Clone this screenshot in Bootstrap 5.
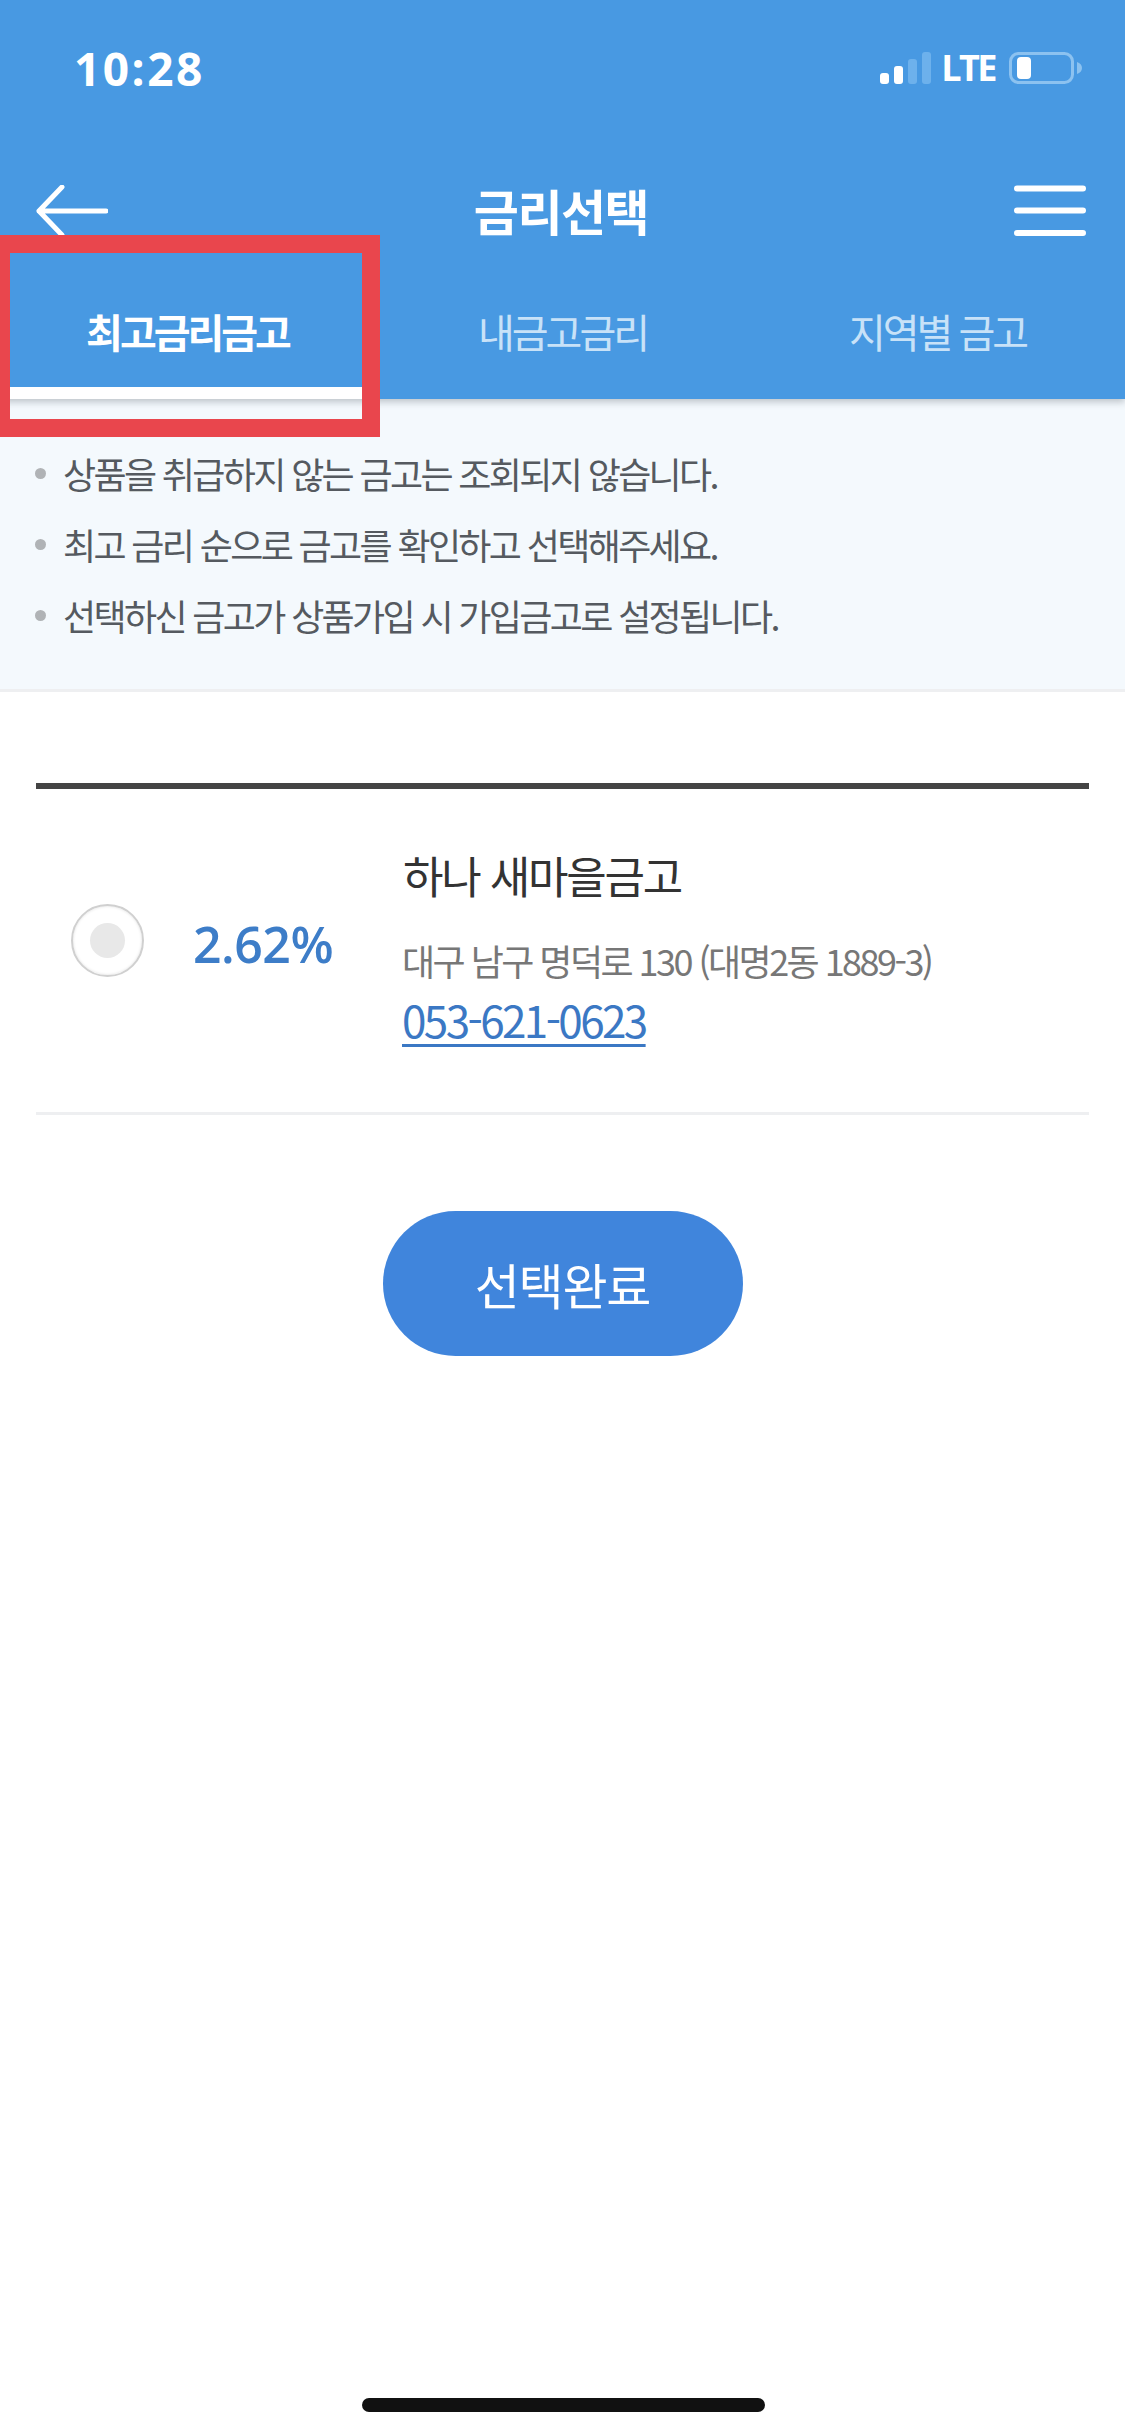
<!DOCTYPE html>
<html lang="ko">
<head>
  <meta charset="UTF-8" />
  <meta name="viewport" content="width=device-width, initial-scale=1.0"/>
  <title>금리선택</title>
  <link href="https://cdn.jsdelivr.net/npm/bootstrap@5.3.0/dist/css/bootstrap.min.css" rel="stylesheet">
  <style>
    body { font-family: "Noto Sans CJK KR", "Noto Sans", sans-serif; background: #fff; }
    .phone-page { position: relative; width: 1125px; height: 2436px; overflow: hidden; background: #fff; }

    /* 상단 파란 영역 */
    .top-area { position: relative; z-index: 2; background: #4899e2; box-shadow: 0 3px 7px rgba(70, 80, 90, .32); }
    .status-bar { height: 136px; padding: 0 43px 0 74px; color: #fff; }
    .status-time { font-family: "Open Sans", sans-serif; font-size: 46px; font-weight: 700; letter-spacing: 2.5px; }
    .status-lte { font-family: "Open Sans", sans-serif; font-size: 36px; font-weight: 700; line-height: 1; letter-spacing: -2.5px; margin: 0 14px 0 10px; }
    .title-bar { height: 150px; padding: 0 39px 0 36px; color: #fff; }
    .title-text { font-size: 49px; font-weight: 700; letter-spacing: -1.5px; line-height: 1; margin: 0 0 4px; }
    .tab-link { display: block; color: #c8e2f8; font-size: 40px; font-weight: 400; letter-spacing: -3px; line-height: 90px; padding: 0 0 11px; border-bottom: 12px solid transparent; text-decoration: none; }
    .tab-link:hover { color: #c8e2f8; }
    .tab-link.active-tab { color: #fff; font-weight: 700; border-bottom-color: #fff; }

    /* 안내문 */
    .notice-box { background: #f4f9fd; border-bottom: 3px solid #eeeff1; padding: 39px 0 38px 35px; margin: 0; }
    .notice-box li { color: #555a60; font-size: 36px; line-height: 71px; letter-spacing: -2.65px; }
    .notice-dot { width: 11px; height: 11px; border-radius: 50%; background: #b0b3b6; margin-right: 17px; flex: none; }

    /* 금고 목록 */
    .bank-list { margin: 91px 36px 0; border-top: 6px solid #444; border-bottom: 3px solid #eeeff1; padding: 56px 0 64px; }
    .radio-mark { width: 73px; height: 73px; margin: 0 49px 12px 35px; border: 2px solid #d0d0d0; border-radius: 50%; background: #fff; box-shadow: inset 0 0 3px rgba(0,0,0,.12); flex: none; }
    .radio-mark span { display: block; width: 35px; height: 35px; border-radius: 50%; background: #e8e8e8; }
    .rate-text { width: 210px; color: #3d7dc8; font-family: "Open Sans", sans-serif; font-size: 50px; font-weight: 600; margin-bottom: 4px; flex: none; letter-spacing: -.5px; }
    .bank-name { color: #333; font-size: 44px; line-height: 60px; letter-spacing: -2.2px; margin-bottom: 25px; }
    .bank-addr { color: #777; font-size: 36px; line-height: 60px; letter-spacing: -2.55px; margin-left: -1px; }
    .bank-tel { display: inline-block; margin-left: -1px; color: #3b78c4; font-size: 44px; line-height: 58px; letter-spacing: -2.6px; text-decoration-thickness: 3px; text-underline-offset: 6px; }

    .done-btn { width: 360px; height: 145px; margin-top: 96px; background: #4085dc; border: 0; color: #fff; font-size: 49px; letter-spacing: -1.2px; }
    .done-btn:hover { background: #4085dc; color: #fff; }

    /* 겹쳐 그리는 요소 */
    .red-mark { position: absolute; z-index: 3; left: 0; top: 235px; width: 380px; height: 202px; border: solid #e9464d; border-width: 18px 18px 18px 10px; }
    .home-bar { position: absolute; left: 362px; top: 2398px; width: 403px; height: 14px; border-radius: 7px; background: #111; }
  </style>
</head>
<body>
  <div class="phone-page">

    <div class="top-area">
      <!-- 상태바 -->
      <div class="status-bar d-flex align-items-center justify-content-between">
        <span class="status-time">10:28</span>
        <div class="d-flex align-items-center">
          <svg width="51" height="32" viewBox="0 0 51 32">
            <rect x="0" y="21" width="9" height="11" rx="3" fill="#fff"/>
            <rect x="14" y="14" width="9" height="18" rx="3" fill="#fff"/>
            <rect x="28" y="7" width="9" height="25" rx="3" fill="#6db1ec"/>
            <rect x="42" y="0" width="9" height="32" rx="3" fill="#6db1ec"/>
          </svg>
          <span class="status-lte">LTE</span>
          <svg width="73" height="32" viewBox="0 0 73 32">
            <rect x="1.5" y="1.5" width="62" height="29" rx="8" fill="none" stroke="#8cc2f0" stroke-width="3"/>
            <rect x="8" y="5" width="14" height="22" rx="4" fill="#fff"/>
            <path d="M68 10c3 1 5 3 5 6s-2 5-5 6z" fill="#8cc2f0"/>
          </svg>
        </div>
      </div>

      <!-- 타이틀 -->
      <div class="title-bar d-flex align-items-center justify-content-between">
        <svg width="72" height="52" viewBox="0 0 72 52">
          <path d="M26 2 3 26l23 24M3 26h67" fill="none" stroke="#fff" stroke-width="5" stroke-linecap="round" stroke-linejoin="round"/>
        </svg>
        <h1 class="title-text">금리선택</h1>
        <svg width="72" height="52" viewBox="0 0 72 52">
          <path d="M3 3.500h66M3 25.500h66M3 48h66" fill="none" stroke="#fff" stroke-width="6" stroke-linecap="round"/>
        </svg>
      </div>

      <!-- 탭 -->
      <ul class="nav nav-justified text-center">
        <li class="nav-item"><a class="tab-link active-tab" href="#">최고금리금고</a></li>
        <li class="nav-item"><a class="tab-link" href="#">내금고금리</a></li>
        <li class="nav-item"><a class="tab-link" href="#">지역별 금고</a></li>
      </ul>
    </div>

    <ul class="notice-box list-unstyled">
      <li class="d-flex align-items-center"><span class="notice-dot"></span>상품을 취급하지 않는 금고는 조회되지 않습니다.</li>
      <li class="d-flex align-items-center"><span class="notice-dot"></span>최고 금리 순으로 금고를 확인하고 선택해주세요.</li>
      <li class="d-flex align-items-center"><span class="notice-dot"></span>선택하신 금고가 상품가입 시 가입금고로 설정됩니다.</li>
    </ul>

    <div class="bank-list d-flex align-items-center">
      <div class="radio-mark d-flex align-items-center justify-content-center"><span></span></div>
      <div class="rate-text">2.62%</div>
      <div>
        <div class="bank-name">하나 새마을금고</div>
        <div class="bank-addr">대구 남구 명덕로 130 (대명2동 1889-3)</div>
        <a class="bank-tel" href="#">053-621-0623</a>
      </div>
    </div>

    <div class="text-center">
      <button type="button" class="btn done-btn rounded-pill">선택완료</button>
    </div>

    <div class="red-mark"></div>
    <div class="home-bar"></div>
  </div>
  <script src="https://cdn.jsdelivr.net/npm/bootstrap@5.3.0/dist/js/bootstrap.bundle.min.js"></script>
</body>
</html>
